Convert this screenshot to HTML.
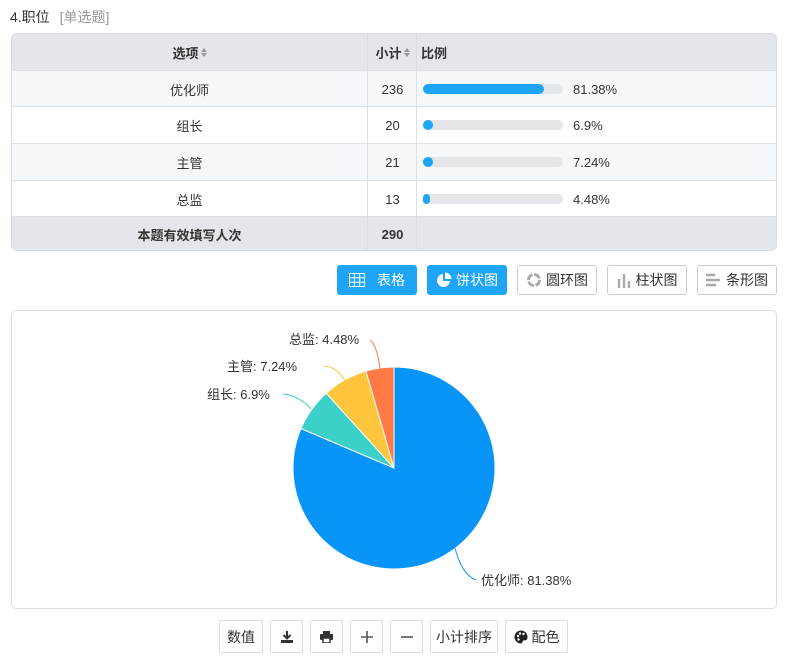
<!DOCTYPE html><html><head><meta charset="utf-8"><style>
body{margin:0;background:#fff;font-family:"Liberation Sans","Noto Sans CJK SC",sans-serif;font-size:13px;color:#333;width:798px;height:671px;position:relative;overflow:hidden}
.a{position:absolute}
.tbl{left:11px;top:33px;width:764px;height:216px;border:1px solid #d9dce1;border-radius:6px;overflow:hidden}
.row{position:absolute;left:0;width:764px;border-top:1px solid #dde1e6}
.c{position:absolute;top:0;height:100%;display:flex;align-items:center;justify-content:center}
.btn{position:absolute;top:265px;height:28px;border:1px solid #ccc;border-radius:3px;display:flex;align-items:center;justify-content:center;font-size:14px;color:#333;background:#fff}
.btn.on{background:#1ea5f7;border-color:#1ea5f7;color:#fff}
.sb{position:absolute;top:620px;height:31px;border:1px solid #ddd;border-radius:2px;display:flex;align-items:center;justify-content:center;font-size:14px;color:#333;background:#fff}
.bar{position:absolute;left:411px;width:140px;height:10px;border-radius:5px;background:#e4e6ea;top:13px}
.bar i{display:block;height:10px;border-radius:5px;background:#1ea5f7}
.pct{position:absolute;left:561px;top:0;height:100%;display:flex;align-items:center;font-size:13px}
.s{margin-left:2px}
</style></head><body>
<div class="a" style="left:10px;top:7px;font-size:14px;color:#333">4.职位 <span style="color:#999;margin-left:6px">[单选题]</span></div>
<div class="a tbl">
 <div class="row" style="top:0;height:36px;border-top:0;background:#e3e6ea;font-weight:bold">
  <div class="c" style="left:0;width:355px">选项<svg class="s" width="6" height="9"><path d="M0 4L3 0L6 4ZM0 5L3 9L6 5Z" fill="#999"/></svg></div>
  <div class="c" style="left:355px;width:49px;border-left:1px solid #d9dce1">小计<svg class="s" width="6" height="9"><path d="M0 4L3 0L6 4ZM0 5L3 9L6 5Z" fill="#999"/></svg></div>
  <div class="c" style="left:404px;width:360px;border-left:1px solid #d9dce1;justify-content:flex-start;padding-left:4px">比例</div>
 </div>
 <div class="row" style="top:36px;height:36px;background:#f5f8fb"><div class="c" style="left:0;width:355px">优化师</div><div class="c" style="left:355px;width:49px;border-left:1px solid #dde1e6">236</div><div class="c" style="left:404px;width:360px;border-left:1px solid #dde1e6"></div><div class="bar"><i style="width:121px"></i></div><div class="pct">81.38%</div></div>
 <div class="row" style="top:72px;height:36px"><div class="c" style="left:0;width:355px">组长</div><div class="c" style="left:355px;width:49px;border-left:1px solid #dde1e6">20</div><div class="c" style="left:404px;width:360px;border-left:1px solid #dde1e6"></div><div class="bar"><i style="width:10px"></i></div><div class="pct">6.9%</div></div>
 <div class="row" style="top:109px;height:36px;background:#f5f8fb"><div class="c" style="left:0;width:355px">主管</div><div class="c" style="left:355px;width:49px;border-left:1px solid #dde1e6">21</div><div class="c" style="left:404px;width:360px;border-left:1px solid #dde1e6"></div><div class="bar"><i style="width:10px"></i></div><div class="pct">7.24%</div></div>
 <div class="row" style="top:146px;height:36px"><div class="c" style="left:0;width:355px">总监</div><div class="c" style="left:355px;width:49px;border-left:1px solid #dde1e6">13</div><div class="c" style="left:404px;width:360px;border-left:1px solid #dde1e6"></div><div class="bar"><i style="width:7px"></i></div><div class="pct">4.48%</div></div>
 <div class="row" style="top:182px;height:34px;background:#e3e6ea;font-weight:bold"><div class="c" style="left:0;width:355px">本题有效填写人次</div><div class="c" style="left:355px;width:49px;border-left:1px solid #d9dce1">290</div><div class="c" style="left:404px;width:360px;border-left:1px solid #d9dce1"></div></div>
</div>
<div class="btn on" style="left:337px;width:78px"><svg width="16" height="14" style="margin-right:12px"><rect x="0.5" y="0.5" width="15" height="13" fill="none" stroke="#fff"/><path d="M0 4.8H16M0 9.2H16M5.3 0V14M10.7 0V14" stroke="#fff"/></svg>表格</div>
<div class="btn on" style="left:427px;width:78px"><svg width="16" height="16" style="margin-right:4px"><path d="M7 2A6.5 6.5 0 1 0 14 9H7Z" fill="#fff"/><path d="M9 0.5A6.5 6.5 0 0 1 15.5 7H9Z" fill="#fff"/></svg>饼状图</div>
<div class="btn" style="left:517px;width:78px"><svg width="16" height="16" style="margin-right:4px"><circle cx="8" cy="8" r="5.5" fill="none" stroke="#aaa" stroke-width="3" stroke-dasharray="7 1.6"/></svg>圆环图</div>
<div class="btn" style="left:607px;width:78px"><svg width="14" height="16" style="margin-right:5px"><path d="M2 7V16M7 2V16M12 9V16" stroke="#aaa" stroke-width="2.4"/></svg>柱状图</div>
<div class="btn" style="left:697px;width:78px"><svg width="14" height="16" style="margin-right:6px"><path d="M0 3H9M0 8H14M0 13H10" stroke="#aaa" stroke-width="2.4"/></svg>条形图</div>
<div class="a" style="left:11px;top:310px;width:764px;height:297px;border:1px solid #ddd;border-radius:5px"></div>
<svg class="a" style="left:0;top:0" width="798" height="671">
<g stroke="#fff" stroke-width="1">
<path d="M394 468L394 367A101 101 0 1 1 301.0 428.6Z" fill="#0995f7"/>
<path d="M394 468L301.0 428.6A101 101 0 0 1 326.2 393.2Z" fill="#3bd0c8"/>
<path d="M394 468L326.2 393.2A101 101 0 0 1 365.9 371.0Z" fill="#ffc53d"/>
<path d="M394 468L365.9 371.0A101 101 0 0 1 394 367Z" fill="#ff7a45"/>
</g>
<g fill="none" stroke-width="1">
<path d="M455 548Q462 575 476 580" stroke="#0995f7"/>
<path d="M311 409Q300 396 283 394" stroke="#3bd0c8"/>
<path d="M345 381Q338 367 324 366" stroke="#ffc53d"/>
<path d="M380 369Q377 345 370 340" stroke="#ff7a45"/>
</g>
<g font-size="13" fill="#333" font-family="Liberation Sans,Noto Sans CJK SC,sans-serif">
<text x="481" y="585">优化师: 81.38%</text>
<text x="207" y="399">组长: 6.9%</text>
<text x="227" y="371">主管: 7.24%</text>
<text x="289" y="344">总监: 4.48%</text>
</g></svg>
<div class="sb" style="left:219px;width:42px">数值</div>
<div class="sb" style="left:270px;width:31px"><svg width="12" height="12"><path d="M6 0V7M2.5 4L6 7.5L9.5 4" stroke="#333" stroke-width="2" fill="none"/><rect x="0" y="9" width="12" height="3" fill="#333"/></svg></div>
<div class="sb" style="left:310px;width:31px"><svg width="13" height="12"><rect x="3" y="0" width="7" height="3" fill="#333"/><rect x="0" y="3" width="13" height="6" rx="1" fill="#333"/><rect x="3" y="7" width="7" height="5" fill="#fff" stroke="#333" stroke-width="1.5"/></svg></div>
<div class="sb" style="left:350px;width:31px"><svg width="12" height="12"><path d="M6 0V12M0 6H12" stroke="#555" stroke-width="1.6"/></svg></div>
<div class="sb" style="left:390px;width:31px"><svg width="12" height="12"><path d="M0 6H12" stroke="#555" stroke-width="1.6"/></svg></div>
<div class="sb" style="left:430px;width:66px">小计排序</div>
<div class="sb" style="left:505px;width:61px"><svg width="14" height="14" style="margin-right:4px"><path d="M7 0.5A6.5 6.5 0 0 0 7 13.5C9 13.5 8 11 9.5 10.5C11 10 13.5 11 13.5 7A6.5 6.5 0 0 0 7 0.5Z" fill="#222"/><circle cx="4" cy="6" r="1.2" fill="#fff"/><circle cx="6" cy="3.5" r="1.2" fill="#fff"/><circle cx="9.5" cy="4" r="1.2" fill="#fff"/><circle cx="4.5" cy="9.5" r="1.2" fill="#fff"/></svg>配色</div>
</body></html>
